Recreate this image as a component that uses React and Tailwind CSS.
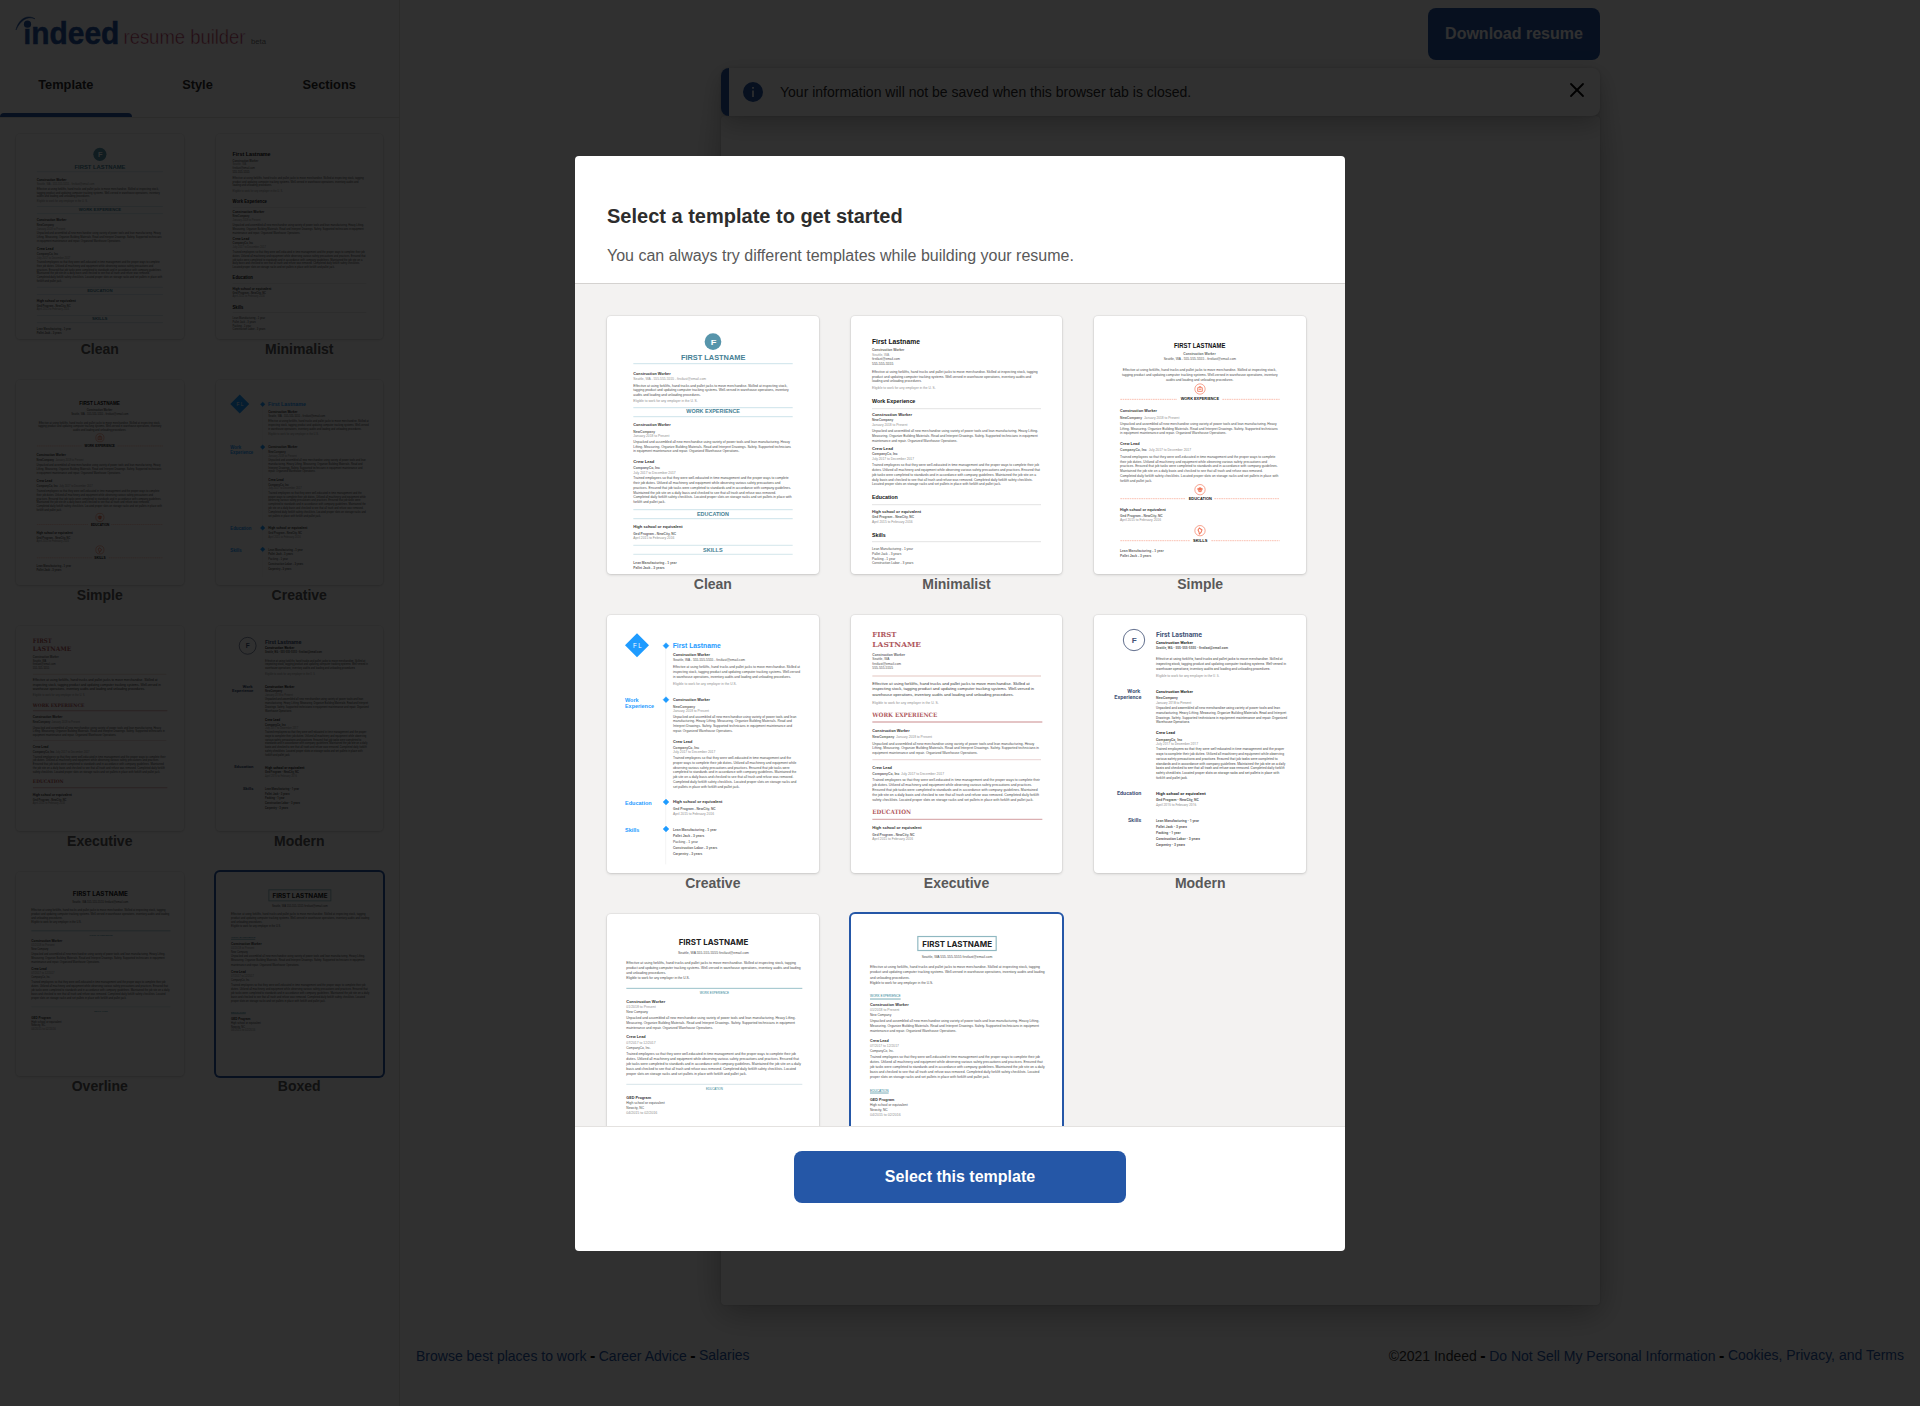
import React from "react";
import { X } from "lucide-react";

/* Styles for the miniature resume text: [font size, weight, colour] */
const STYLES = {
  b: [12.5, 700, "#303030"],
  m: [10.5, 700, "#666666"],
  n: [10.5, 400, "#4c4c4c"],
  g: [10.5, 400, "#8f8f8f"],
  t: [9.5, 400, "#2d7f93"],
};

/* Rows are [style, left, right, centre y, text] */
function Rows({ rows, family = "Liberation Sans" }) {
  return rows.map(([style, x1, x2, y, text], i) => {
    const [size, weight, fill] = STYLES[style];
    return (
      <text
        key={i}
        x={x1}
        y={y + size * 0.34}
        textLength={x2 - x1}
        lengthAdjust="spacingAndGlyphs"
        fontFamily={`${family}, sans-serif`}
        fontSize={size}
        fontWeight={weight}
        fill={fill}
      >
        {text}
      </text>
    );
  });
}

function Head({ x1, x2, y, size, fill, family = "Liberation Sans", weight = 700, children }) {
  return (
    <text
      x={x1}
      y={y}
      textLength={x2 - x1}
      lengthAdjust="spacingAndGlyphs"
      fontFamily={`${family}, sans-serif`}
      fontSize={size}
      fontWeight={weight}
      fill={fill}
    >
      {children}
    </text>
  );
}

function Rule({ x1, x2, y, stroke, w = 2, dash }) {
  return <line x1={x1} x2={x2} y1={y} y2={y} stroke={stroke} strokeWidth={w} strokeDasharray={dash} />;
}

function Sheet({ origin, children }) {
  return (
    <svg viewBox={`${origin} 635 776`} className="block h-full w-full" aria-hidden="true">
      {children}
    </svg>
  );
}

const WIDE_INTRO = [
  "Effective at using forklifts, hand trucks and pallet jacks to move merchandise. Skilled at inspecting stock,",
  "tagging product and updating computer tracking systems. Well-versed in warehouse operations, inventory",
  "audits and loading and unloading procedures.",
];
const WIDE_JOB = [
  "Unpacked and assembled all new merchandise using variety of power tools and lean manufacturing. Heavy",
  "Lifting. Measuring. Organize Building Materials. Read and Interpret Drawings. Safety. Supported technicians",
  "in equipment maintenance and repair. Organized Warehouse Operations.",
];
const WIDE_LEAD = [
  "Trained employees so that they were well-educated in time management and the proper ways to complete",
  "their job duties. Utilized all machinery and equipment while observing various safety precautions and",
  "practices. Ensured that job tasks were completed to standards and in accordance with company guidelines.",
  "Maintained the job site on a daily basis and checked to see that all trash and refuse was removed.",
  "Completed daily forklift safety checklists. Located proper slots on storage racks and set pallets in place with",
  "forklift and pallet jack.",
];

function Clean() {
  const teal = "#467f95";
  return (
    <Sheet origin="21 17">
      <circle cx="339" cy="94" r="25" fill="#5795ab" />
      <Head x1={332} x2={349} y={104} size={24} fill="#ffffff">F</Head>
      <Head x1={243} x2={436} y={149} size={21} fill={teal}>FIRST LASTNAME</Head>
      {[160, 292, 319, 598, 625].map((y) => (
        <Rule key={y} x1={100} x2={578} y={y} stroke="#c3dde6" w={2.5} />
      ))}
      {[705, 732].map((y) => (
        <Rule key={y} x1={100} x2={578} y={y} stroke="#dcebef" w={4} />
      ))}
      <Head x1={259} x2={420} y={309} size={15} fill={teal}>WORK EXPERIENCE</Head>
      <Head x1={291} x2={387} y={616} size={15} fill={teal}>EDUCATION</Head>
      <Head x1={309} x2={368} y={724} size={15} fill={teal}>SKILLS</Head>
      <Rows
        rows={[
          ["b", 100, 212, 191, "Construction Worker"],
          ["g", 100, 318, 206, "Seattle, WA - 555-555-5555 - firstlast@email.com"],
          ["n", 100, 562, 225, WIDE_INTRO[0]],
          ["n", 100, 566, 239, WIDE_INTRO[1]],
          ["n", 100, 302, 252, WIDE_INTRO[2]],
          ["g", 100, 293, 270, "Eligible to work for any employer in the U. S."],
          ["b", 100, 212, 343, "Construction Worker"],
          ["m", 100, 165, 364, "NewCompany"],
          ["g", 100, 208, 377, "January 2018 to Present"],
          ["n", 100, 570, 394, WIDE_JOB[0]],
          ["n", 100, 573, 408, WIDE_JOB[1]],
          ["n", 100, 418, 422, WIDE_JOB[2]],
          ["b", 100, 163, 453, "Crew Lead"],
          ["m", 100, 180, 473, "CompanyCo, Inc"],
          ["g", 100, 227, 486, "July 2017 to December 2017"],
          ["n", 100, 566, 503, WIDE_LEAD[0]],
          ["n", 100, 541, 518, WIDE_LEAD[1]],
          ["n", 100, 573, 532, WIDE_LEAD[2]],
          ["n", 100, 528, 546, WIDE_LEAD[3]],
          ["n", 100, 575, 560, WIDE_LEAD[4]],
          ["n", 100, 196, 574, WIDE_LEAD[5]],
          ["b", 100, 248, 649, "High school or equivalent"],
          ["m", 100, 228, 669, "Ged Program - NewCity, NC"],
          ["g", 100, 223, 682, "April 2015 to February 2016"],
          ["m", 100, 230, 757, "Lean Manufacturing - 1 year"],
          ["m", 100, 194, 772, "Pallet Jack - 3 years"],
        ]}
      />
    </Sheet>
  );
}

function Minimalist() {
  return (
    <Sheet origin="33 17">
      <Head x1={96} x2={240} y={102} size={21} fill="#111111">First Lastname</Head>
      <Head x1={96} x2={226} y={278} size={17} fill="#111111">Work Experience</Head>
      <Head x1={96} x2={173} y={567} size={17} fill="#111111">Education</Head>
      <Head x1={96} x2={137} y={680} size={17} fill="#111111">Skills</Head>
      {[295, 583, 694].map((y) => (
        <Rule key={y} x1={96} x2={603} y={y} stroke="#dddddd" w={2.5} />
      ))}
      <Rows
        rows={[
          ["m", 96, 193, 118, "Construction Worker"],
          ["g", 96, 148, 132, "Seattle, WA"],
          ["n", 96, 180, 146, "firstlast@email.com"],
          ["n", 96, 160, 160, "555-555-5555"],
          ["n", 96, 593, 184, WIDE_INTRO[0] + " tagging"],
          ["n", 96, 573, 198, "product and updating computer tracking systems. Well-versed in warehouse operations, inventory audits and"],
          ["n", 96, 245, 212, "loading and unloading procedures."],
          ["g", 96, 287, 233, "Eligible to work for any employer in the U. S."],
          ["b", 96, 216, 314, "Construction Worker"],
          ["m", 96, 160, 329, "NewCompany"],
          ["g", 96, 202, 343, "January 2018 to Present"],
          ["n", 96, 594, 362, WIDE_JOB[0] + " Lifting."],
          ["n", 96, 593, 377, "Measuring. Organize Building Materials. Read and Interpret Drawings. Safety. Supported technicians in equipment"],
          ["n", 96, 352, 391, "maintenance and repair. Organized Warehouse Operations."],
          ["b", 96, 159, 416, "Crew Lead"],
          ["m", 96, 173, 431, "CompanyCo, Inc"],
          ["g", 96, 222, 445, "July 2017 to December 2017"],
          ["n", 96, 597, 464, WIDE_LEAD[0] + " their job"],
          ["n", 96, 600, 479, "duties. Utilized all machinery and equipment while observing various safety precautions and practices. Ensured that"],
          ["n", 96, 588, 493, "job tasks were completed to standards and in accordance with company guidelines. Maintained the job site on a"],
          ["n", 96, 578, 507, "daily basis and checked to see that all trash and refuse was removed. Completed daily forklift safety checklists."],
          ["n", 96, 483, 521, "Located proper slots on storage racks and set pallets in place with forklift and pallet jack."],
          ["b", 96, 243, 604, "High school or equivalent"],
          ["m", 96, 222, 619, "Ged Program - NewCity, NC"],
          ["g", 96, 218, 633, "April 2015 to February 2016"],
          ["n", 96, 219, 716, "Lean Manufacturing - 1 year"],
          ["n", 96, 184, 730, "Pallet Jack - 3 years"],
          ["n", 96, 166, 744, "Packing - 1 year"],
          ["n", 96, 220, 758, "Construction Labor - 3 years"],
        ]}
      />
    </Sheet>
  );
}

function Simple() {
  const orange = "#f2775a";
  const dashes = "#f7a38e";
  return (
    <Sheet origin="28 17">
      <Head x1={268} x2={422} y={113} size={19} fill="#111111">FIRST LASTNAME</Head>
      {[[236, 267, 277, 413], [538, 565, 301, 389], [661, 691, 315, 380]].map(([cy, y, a, b]) => (
        <g key={cy}>
          <circle cx="346" cy={cy} r="15.5" fill="none" stroke={orange} strokeWidth="2" />
          <Rule x1={107} x2={a} y={y} stroke={dashes} w={2} dash="5 2" />
          <Rule x1={b} x2={585} y={y} stroke={dashes} w={2} dash="5 2" />
        </g>
      ))}
      <path d="M339 232h14v11h-14zM343 231v-2h6v2" fill="none" stroke={orange} strokeWidth="2.5" />
      <path d="M342 237h8" stroke={orange} strokeWidth="2.5" />
      <path d="M337 536l9-5 9 5-9 5zM341 539v4q5 4 10 0v-4" fill={orange} stroke={orange} />
      <path d="M340 659l4-6 4 3 4 3-3 7-5 5-1-6z" fill="none" stroke={orange} strokeWidth="3" />
      <Head x1={288} x2={403} y={270} size={11} fill="#111111">WORK EXPERIENCE</Head>
      <Head x1={312} x2={382} y={569} size={11} fill="#111111">EDUCATION</Head>
      <Head x1={325} x2={368} y={695} size={11} fill="#111111">SKILLS</Head>
      <Rows
        rows={[
          ["m", 296, 393, 130, "Construction Worker"],
          ["n", 237, 454, 146, "Seattle, WA - 555-555-5555 - firstlast@email.com"],
          ["n", 114, 575, 179, WIDE_INTRO[0]],
          ["n", 112, 579, 193, WIDE_INTRO[1]],
          ["n", 244, 446, 207, WIDE_INTRO[2]],
          ["b", 106, 217, 301, "Construction Worker"],
          ["m", 106, 172, 321, "NewCompany"],
          ["g", 178, 284, 321, "January 2018 to Present"],
          ["n", 106, 576, 339, WIDE_JOB[0]],
          ["n", 106, 579, 354, WIDE_JOB[1]],
          ["n", 106, 425, 368, WIDE_JOB[2]],
          ["b", 106, 165, 399, "Crew Lead"],
          ["m", 106, 186, 419, "CompanyCo, Inc"],
          ["g", 192, 319, 419, "July 2017 to December 2017"],
          ["n", 106, 572, 439, WIDE_LEAD[0]],
          ["n", 106, 547, 453, WIDE_LEAD[1]],
          ["n", 106, 579, 467, WIDE_LEAD[2]],
          ["n", 106, 534, 481, WIDE_LEAD[3]],
          ["n", 106, 581, 496, WIDE_LEAD[4]],
          ["n", 106, 202, 510, WIDE_LEAD[5]],
          ["b", 106, 243, 597, "High school or equivalent"],
          ["m", 106, 234, 616, "Ged Program - NewCity, NC"],
          ["g", 106, 229, 629, "April 2015 to February 2016"],
          ["m", 106, 237, 722, "Lean Manufacturing - 1 year"],
          ["m", 106, 200, 736, "Pallet Jack - 3 years"],
        ]}
      />
    </Sheet>
  );
}

function Creative() {
  const blue = "#1e9bff";
  return (
    <Sheet origin="21 20">
      <line x1="197" x2="197" y1="105" y2="768" stroke="#efefef" strokeWidth="2" />
      <path d="M111 75l36 36-36 36-36-36z" fill={blue} />
      <Head x1={99} x2={125} y={118} size={19} fill="#ffffff" weight={400}>F L</Head>
      {[112, 274, 581, 662].map((y) => (
        <path key={y} d={`M198 ${y - 9}l9 9-9 9-9-9z`} fill={blue} stroke={blue} />
      ))}
      <Head x1={218} x2={362} y={118} size={21} fill={blue}>First Lastname</Head>
      <Head x1={75} x2={116} y={282} size={17} fill={blue}>Work</Head>
      <Head x1={75} x2={162} y={300} size={17} fill={blue}>Experience</Head>
      <Head x1={75} x2={155} y={590} size={17} fill={blue}>Education</Head>
      <Head x1={75} x2={118} y={671} size={17} fill={blue}>Skills</Head>
      <Rows
        rows={[
          ["b", 219, 330, 139, "Construction Worker"],
          ["n", 219, 435, 155, "Seattle, WA - 555-555-5555 - firstlast@email.com"],
          ["n", 219, 600, 176, "Effective at using forklifts, hand trucks and pallet jacks to move merchandise. Skilled at"],
          ["n", 219, 600, 190, "inspecting stock, tagging product and updating computer tracking systems. Well-versed"],
          ["n", 219, 573, 205, "in warehouse operations, inventory audits and loading and unloading procedures."],
          ["g", 219, 410, 226, "Eligible to work for any employer in the U.S."],
          ["b", 219, 330, 274, "Construction Worker"],
          ["m", 219, 285, 294, "NewCompany"],
          ["g", 219, 327, 308, "January 2018 to Present"],
          ["n", 219, 589, 324, "Unpacked and assembled all new merchandise using variety of power tools and lean"],
          ["n", 219, 576, 338, "manufacturing. Heavy Lifting. Measuring. Organize Building Materials. Read and"],
          ["n", 219, 576, 352, "Interpret Drawings. Safety. Supported technicians in equipment maintenance and"],
          ["n", 219, 398, 367, "repair. Organized Warehouse Operations."],
          ["b", 219, 277, 399, "Crew Lead"],
          ["m", 219, 297, 419, "CompanyCo, Inc"],
          ["g", 219, 346, 430, "July 2017 to December 2017"],
          ["n", 219, 573, 448, "Trained employees so that they were well-educated in time management and the"],
          ["n", 219, 589, 462, "proper ways to complete their job duties. Utilized all machinery and equipment while"],
          ["n", 219, 569, 477, "observing various safety precautions and practices. Ensured that job tasks were"],
          ["n", 219, 589, 491, "completed to standards and in accordance with company guidelines. Maintained the"],
          ["n", 219, 580, 505, "job site on a daily basis and checked to see that all trash and refuse was removed."],
          ["n", 219, 589, 519, "Completed daily forklift safety checklists. Located proper slots on storage racks and"],
          ["n", 219, 419, 534, "set pallets in place with forklift and pallet jack."],
          ["b", 219, 367, 581, "High school or equivalent"],
          ["m", 219, 347, 601, "Ged Program - NewCity, NC"],
          ["g", 219, 342, 615, "April 2015 to February 2016"],
          ["m", 219, 350, 664, "Lean Manufacturing - 1 year"],
          ["m", 219, 313, 681, "Pallet Jack - 3 years"],
          ["n", 219, 294, 699, "Packing - 1 year"],
          ["m", 219, 352, 717, "Construction Labor - 3 years"],
          ["m", 219, 307, 735, "Carpentry - 3 years"],
        ]}
      />
    </Sheet>
  );
}

function Executive() {
  const red = "#b05a60";
  const serif = "DejaVu Serif, serif";
  return (
    <Sheet origin="33 20">
      <Head x1={97} x2={169} y={86} size={24} fill={red} family={serif}>FIRST</Head>
      <Head x1={97} x2={243} y={116} size={24} fill={red} family={serif}>LASTNAME</Head>
      <Head x1={97} x2={292} y={327} size={18} fill={red} family={serif}>WORK EXPERIENCE</Head>
      <Head x1={97} x2={213} y={617} size={18} fill={red} family={serif}>EDUCATION</Head>
      <Rule x1={97} x2={603} y={203} stroke="#ecd9d5" w={4} />
      <Rule x1={97} x2={607} y={341} stroke="#dbb0b2" w={4} />
      <Rule x1={97} x2={603} y={454} stroke="#e6cccd" w={2.5} />
      <Rule x1={97} x2={607} y={633} stroke="#dbb0b2" w={4} />
      <Head x1={97} x2={569} y={230} size={13} fill="#3a3a3a" weight={400}>
        Effective at using forklifts, hand trucks and pallet jacks to move merchandise. Skilled at
      </Head>
      <Head x1={97} x2={582} y={246} size={13} fill="#3a3a3a" weight={400}>
        inspecting stock, tagging product and updating computer tracking systems. Well-versed in
      </Head>
      <Head x1={97} x2={522} y={263} size={13} fill="#3a3a3a" weight={400}>
        warehouse operations, inventory audits and loading and unloading procedures.
      </Head>
      <Rows
        rows={[
          ["m", 97, 195, 138, "Construction Worker"],
          ["n", 97, 148, 152, "Seattle, WA"],
          ["n", 97, 183, 165, "firstlast@email.com"],
          ["n", 97, 159, 178, "555-555-5555"],
          ["g", 97, 296, 282, "Eligible to work for any employer in the U. S."],
          ["b", 97, 209, 366, "Construction Worker"],
          ["m", 97, 163, 386, "NewCompany"],
          ["g", 168, 276, 386, "January 2018 to Present"],
          ["n", 97, 583, 405, WIDE_JOB[0]],
          ["n", 97, 597, 419, WIDE_JOB[1] + " in"],
          ["n", 97, 413, 433, "equipment maintenance and repair. Organized Warehouse Operations."],
          ["b", 97, 156, 478, "Crew Lead"],
          ["m", 97, 178, 497, "CompanyCo, Inc"],
          ["g", 183, 312, 497, "July 2017 to December 2017"],
          ["n", 97, 600, 515, WIDE_LEAD[0] + " their"],
          ["n", 97, 576, 530, "job duties. Utilized all machinery and equipment while observing various safety precautions and practices."],
          ["n", 97, 593, 544, "Ensured that job tasks were completed to standards and in accordance with company guidelines. Maintained"],
          ["n", 97, 597, 558, "the job site on a daily basis and checked to see that all trash and refuse was removed. Completed daily forklift"],
          ["n", 97, 580, 573, "safety checklists. Located proper slots on storage racks and set pallets in place with forklift and pallet jack."],
          ["b", 97, 245, 659, "High school or equivalent"],
          ["m", 97, 224, 679, "Ged Program - NewCity, NC"],
          ["g", 97, 219, 692, "April 2015 to February 2016"],
        ]}
      />
    </Sheet>
  );
}

function Modern() {
  const navy = "#435377";
  return (
    <Sheet origin="27 20">
      <circle cx="147" cy="95" r="32" fill="none" stroke={navy} strokeWidth="2.5" />
      <Head x1={140} x2={155} y={104} size={24} fill={navy}>F</Head>
      <Head x1={213} x2={351} y={87} size={22} fill={navy} family="Roboto">First Lastname</Head>
      <Head x1={127} x2={166} y={254} size={16} fill={navy} family="Roboto">Work</Head>
      <Head x1={88} x2={169} y={272} size={16} fill={navy} family="Roboto">Experience</Head>
      <Head x1={96} x2={169} y={560} size={16} fill={navy} family="Roboto">Education</Head>
      <Head x1={129} x2={169} y={641} size={16} fill={navy} family="Roboto">Skills</Head>
      <Rows
        family="Roboto"
        rows={[
          ["b", 213, 324, 102, "Construction Worker"],
          ["m", 213, 429, 118, "Seattle, WA - 555-555-5555 - firstlast@email.com"],
          ["n", 213, 593, 151, "Effective at using forklifts, hand trucks and pallet jacks to move merchandise. Skilled at"],
          ["n", 213, 603, 165, "inspecting stock, tagging product and updating computer tracking systems. Well-versed in"],
          ["n", 213, 556, 180, "warehouse operations, inventory audits and loading and unloading procedures."],
          ["g", 213, 404, 201, "Eligible to work for any employer in the U. S."],
          ["b", 213, 324, 249, "Construction Worker"],
          ["m", 213, 278, 268, "NewCompany"],
          ["g", 213, 319, 282, "January 2018 to Present"],
          ["n", 213, 585, 298, "Unpacked and assembled all new merchandise using variety of power tools and lean"],
          ["n", 213, 604, 313, "manufacturing. Heavy Lifting. Measuring. Organize Building Materials. Read and Interpret"],
          ["n", 213, 606, 327, "Drawings. Safety. Supported technicians in equipment maintenance and repair. Organized"],
          ["n", 213, 315, 341, "Warehouse Operations."],
          ["b", 213, 270, 374, "Crew Lead"],
          ["m", 213, 291, 394, "CompanyCo, Inc"],
          ["g", 213, 339, 405, "July 2017 to December 2017"],
          ["n", 213, 597, 422, "Trained employees so that they were well-educated in time management and the proper"],
          ["n", 213, 597, 437, "ways to complete their job duties. Utilized all machinery and equipment while observing"],
          ["n", 213, 578, 451, "various safety precautions and practices. Ensured that job tasks were completed to"],
          ["n", 213, 601, 465, "standards and in accordance with company guidelines. Maintained the job site on a daily"],
          ["n", 213, 599, 479, "basis and checked to see that all trash and refuse was removed. Completed daily forklift"],
          ["n", 213, 583, 494, "safety checklists. Located proper slots on storage racks and set pallets in place with"],
          ["n", 213, 308, 508, "forklift and pallet jack."],
          ["b", 213, 362, 556, "High school or equivalent"],
          ["m", 213, 341, 575, "Ged Program - NewCity, NC"],
          ["g", 213, 334, 589, "April 2015 to February 2016"],
          ["m", 213, 342, 638, "Lean Manufacturing - 1 year"],
          ["m", 213, 306, 656, "Pallet Jack - 3 years"],
          ["m", 213, 287, 674, "Packing - 1 year"],
          ["m", 213, 345, 691, "Construction Labor - 3 years"],
          ["m", 213, 300, 709, "Carpentry - 3 years"],
        ]}
      />
    </Sheet>
  );
}

const BODY_INTRO = [
  "Effective at using forklifts, hand trucks and pallet jacks to move merchandise. Skilled at inspecting stock, tagging",
  "product and updating computer tracking systems. Well-versed in warehouse operations, inventory audits and loading",
  "and unloading procedures.",
];
const BODY_JOB = [
  "Unpacked and assembled all new merchandise using variety of power tools and lean manufacturing. Heavy Lifting.",
  "Measuring. Organize Building Materials. Read and Interpret Drawings. Safety. Supported technicians in equipment",
  "maintenance and repair. Organized Warehouse Operations.",
];
const BODY_LEAD = [
  "Trained employees so that they were well-educated in time management and the proper ways to complete their job",
  "duties. Utilized all machinery and equipment while observing various safety precautions and practices. Ensured that",
  "job tasks were completed to standards and in accordance with company guidelines. Maintained the job site on a daily",
  "basis and checked to see that all trash and refuse was removed. Completed daily forklift safety checklists. Located",
  "proper slots on storage racks and set pallets in place with forklift and pallet jack.",
];

function Overline() {
  return (
    <Sheet origin="112 42">
      <Head x1={327} x2={536} y={134} size={23} fill="#222222" family="Inter">FIRST LASTNAME</Head>
      <Rule x1={170} x2={698} y={265} stroke="#86b4bf" w={2.5} />
      <Rule x1={170} x2={698} y={553} stroke="#cfe0e4" w={2.5} />
      <Rows
        rows={[
          ["n", 325, 538, 157, "Seattle, WA  555-555-5555  firstlast@email.com"],
          ["n", 170, 679, 187, BODY_INTRO[0]],
          ["n", 170, 693, 202, BODY_INTRO[1]],
          ["n", 170, 289, 217, BODY_INTRO[2]],
          ["n", 170, 360, 232, "Eligible to work for any employer in the U.S."],
          ["t", 390, 478, 280, "WORK EXPERIENCE"],
          ["b", 170, 287, 305, "Construction Worker"],
          ["g", 170, 258, 320, "01/2018 to Present"],
          ["n", 170, 235, 335, "New Company"],
          ["n", 170, 678, 353, BODY_JOB[0]],
          ["n", 170, 676, 368, BODY_JOB[1]],
          ["n", 170, 430, 384, BODY_JOB[2]],
          ["b", 170, 228, 411, "Crew Lead"],
          ["g", 170, 258, 427, "07/2017 to 12/2017"],
          ["n", 170, 243, 442, "CompanyCo, Inc."],
          ["n", 170, 679, 460, BODY_LEAD[0]],
          ["n", 170, 688, 475, BODY_LEAD[1]],
          ["n", 170, 694, 490, BODY_LEAD[2]],
          ["n", 170, 679, 505, BODY_LEAD[3]],
          ["n", 170, 531, 520, BODY_LEAD[4]],
          ["t", 409, 460, 568, "EDUCATION"],
          ["b", 170, 244, 594, "GED Program"],
          ["n", 170, 285, 609, "High school or equivalent"],
          ["n", 170, 223, 623, "Newcity, NC"],
          ["g", 170, 263, 637, "04/2015 to 02/2016"],
        ]}
      />
    </Sheet>
  );
}

function Boxed() {
  return (
    <Sheet origin="844 42">
      <rect x="1044.5" y="109.5" width="235" height="42" fill="none" stroke="#8fb8c1" strokeWidth="3.5" />
      <Head x1={1058} x2={1267} y={140} size={23} fill="#222222" family="Inter">FIRST LASTNAME</Head>
      <Rule x1={901} x2={993} y={297} stroke="#5e9aa8" w={2.5} />
      <Rule x1={901} x2={957} y={579} stroke="#5e9aa8" w={2.5} />
      <Rows
        rows={[
          ["n", 1056, 1268, 171, "Seattle, WA  555-555-5555  firstlast@email.com"],
          ["n", 901, 1411, 201, BODY_INTRO[0]],
          ["n", 901, 1425, 216, BODY_INTRO[1]],
          ["n", 901, 1020, 232, BODY_INTRO[2]],
          ["n", 901, 1090, 247, "Eligible to work for any employer in the U.S."],
          ["t", 901, 993, 289, "WORK EXPERIENCE"],
          ["b", 901, 1017, 314, "Construction Worker"],
          ["g", 901, 989, 329, "01/2018 to Present"],
          ["n", 901, 965, 345, "New Company"],
          ["n", 901, 1409, 362, BODY_JOB[0]],
          ["n", 901, 1408, 377, BODY_JOB[1]],
          ["n", 901, 1160, 393, BODY_JOB[2]],
          ["b", 901, 957, 421, "Crew Lead"],
          ["g", 901, 988, 436, "07/2017 to 12/2017"],
          ["n", 901, 973, 451, "CompanyCo, Inc."],
          ["n", 901, 1411, 469, BODY_LEAD[0]],
          ["n", 901, 1419, 485, BODY_LEAD[1]],
          ["n", 901, 1425, 500, BODY_LEAD[2]],
          ["n", 901, 1409, 515, BODY_LEAD[3]],
          ["n", 901, 1260, 530, BODY_LEAD[4]],
          ["t", 901, 957, 572, "EDUCATION"],
          ["b", 901, 974, 598, "GED Program"],
          ["n", 901, 1014, 613, "High school or equivalent"],
          ["n", 901, 954, 628, "Newcity, NC"],
          ["g", 901, 993, 643, "04/2015 to 02/2016"],
        ]}
      />
    </Sheet>
  );
}

const TEMPLATES = [
  ["Clean", Clean],
  ["Minimalist", Minimalist],
  ["Simple", Simple],
  ["Creative", Creative],
  ["Executive", Executive],
  ["Modern", Modern],
  ["Overline", Overline],
  ["Boxed", Boxed],
];

function TemplateCard({ name, Preview, selected }) {
  return (
    <button type="button" className="block w-full text-center">
      <div
        className={
          selected
            ? "aspect-[9/11] overflow-hidden rounded bg-white ring-2 ring-[#2557a7]"
            : "aspect-[9/11] overflow-hidden rounded bg-white shadow-[0_0_0_1px_rgba(0,0,0,0.04),0_1px_3px_rgba(0,0,0,0.15)]"
        }
      >
        <Preview />
      </div>
      <div className="text-sm leading-5 font-bold text-[#595959]">{name}</div>
    </button>
  );
}

function Logo() {
  return (
    <svg width="260" height="40" viewBox="10 10 260 40" className="block">
      <path d="M16 30C18 20.500 26 13.500 35 18.800C27 15.500 20 21 16 30z" fill="#2557a7" stroke="#2557a7" strokeWidth="0.500" />
      <circle cx="27.500" cy="24.200" r="3.600" fill="#2557a7" />
      <text x="23.500" y="43.500" fontFamily="Liberation Sans, sans-serif" fontSize="27" fontWeight="700" fill="#2557a7" stroke="#2557a7" strokeWidth="0.500">
        i
        <tspan x="31.300" fontSize="31" textLength="88" lengthAdjust="spacingAndGlyphs">ndeed</tspan>
      </text>
      <text x="123.500" y="43.500" textLength="122" lengthAdjust="spacingAndGlyphs" fontFamily="Liberation Sans, sans-serif" fontSize="19.500" fill="#b8345c" stroke="#ffffff" strokeWidth="0.450">resume builder</text>
      <text x="251" y="43.500" textLength="15" lengthAdjust="spacingAndGlyphs" fontFamily="Liberation Sans, sans-serif" fontSize="8" fill="#767676">beta</text>
    </svg>
  );
}

function Sidebar() {
  return (
    <aside className="w-[400px] shrink-0 border-r border-[#e4e2e0]">
      <div className="h-[52px] pt-2.5 pl-2.5">
        <Logo />
      </div>
      <nav className="flex h-[66px] border-b border-[#e4e2e0] pr-1 text-[12.800px] font-bold text-[#2d2d2d]">
        {["Template", "Style", "Sections"].map((tab, i) => (
          <div key={tab} className="flex flex-1 flex-col">
            <div className="flex flex-1 items-center justify-center pt-1">{tab}</div>
            <div className={i === 0 ? "h-1 rounded-t bg-[#2557a7]" : "h-1"} />
          </div>
        ))}
      </nav>
      <div className="grid grid-cols-2 gap-x-8 gap-y-[21.200px] px-4 pt-4">
        {TEMPLATES.map(([name, Preview]) => (
          <TemplateCard key={name} name={name} Preview={Preview} selected={name === "Boxed"} />
        ))}
      </div>
    </aside>
  );
}

function Link({ children, raised }) {
  return <a className={raised ? "-mt-px text-[#2557a7]" : "text-[#2557a7]"}>{children}</a>;
}

function Dash() {
  return <span className="mx-[3.500px] text-base leading-5 font-semibold text-black">-</span>;
}

function Main() {
  return (
    <main className="flex min-w-0 flex-1 flex-col">
      <div className="ml-[321px] w-[879px]">
        <div className="flex h-[68px] justify-end pt-2">
          <button type="button" className="h-[52px] w-[172px] rounded-lg bg-[#2557a7] font-bold text-white">
            Download resume
          </button>
        </div>
        <div className="relative flex h-12 items-center rounded-lg border-l-8 border-[#2557a7] bg-white pr-3.5 text-sm text-[#2d2d2d] shadow-[0_0_3px_rgba(0,0,0,0.15),0_8px_24px_rgba(0,0,0,0.25)]">
          <svg width="20" height="20" viewBox="0 0 20 20" className="ml-[14px]">
            <circle cx="10" cy="10" r="10" fill="#2557a7" />
            <path d="M10 8.500V15M10 5V6.800" stroke="#fff" strokeWidth="1.600" />
          </svg>
          <span className="ml-[17px] flex-1">Your information will not be saved when this browser tab is closed.</span>
          <X className="-mt-1 -mr-[3px] h-[24px] w-[24px] text-black" strokeWidth={1.8} />
        </div>
        <div className="h-[1189px] rounded bg-white shadow-[0_0_2px_rgba(0,0,0,0.2),0_8px_32px_rgba(0,0,0,0.3)]" />
      </div>
      <footer className="mt-[41px] flex justify-between px-4 text-sm leading-5 text-[#2d2d2d]">
        <div className="flex">
          <Link>Browse best places to work</Link>
          <Dash />
          <Link>Career Advice</Link>
          <Dash />
          <Link raised>Salaries</Link>
        </div>
        <div className="flex">
          <span>©2021 Indeed</span>
          <Dash />
          <Link>Do Not Sell My Personal Information</Link>
          <Dash />
          <Link raised>Cookies, Privacy, and Terms</Link>
        </div>
      </footer>
    </main>
  );
}

function TemplateDialog() {
  return (
    <section className="flex h-[1095px] w-[770px] flex-col overflow-hidden rounded-sm bg-white">
      <header className="h-[128px] shrink-0 border-b border-[#d4d2d0] px-8 pt-[46px]">
        <h1 className="text-xl leading-7 font-bold text-[#2d2d2d]">Select a template to get started</h1>
        <p className="mt-3.5 text-base leading-6 text-[#595959]">
          You can always try different templates while building your resume.
        </p>
      </header>
      <div className="min-h-0 flex-1 overflow-hidden bg-[#f3f2f1] pt-8 pr-[39px] pl-8">
        <div className="grid grid-cols-3 gap-x-8 gap-y-[20.300px]">
          {TEMPLATES.map(([name, Preview]) => (
            <TemplateCard key={name} name={name} Preview={Preview} selected={name === "Boxed"} />
          ))}
        </div>
      </div>
      <footer className="flex h-[125px] shrink-0 justify-center border-t border-[#e4e2e0] pt-6">
        <button type="button" className="h-[52px] w-[332px] rounded-lg bg-[#2557a7] text-base font-bold text-white">
          Select this template
        </button>
      </footer>
    </section>
  );
}

export default function App() {
  return (
    <div className="relative h-[1406px] overflow-hidden bg-white font-['Liberation_Sans',Arial,sans-serif]">
      <div className="flex h-full">
        <Sidebar />
        <Main />
      </div>
      <div className="absolute inset-0 flex items-center justify-center bg-black/81">
        <TemplateDialog />
      </div>
    </div>
  );
}
